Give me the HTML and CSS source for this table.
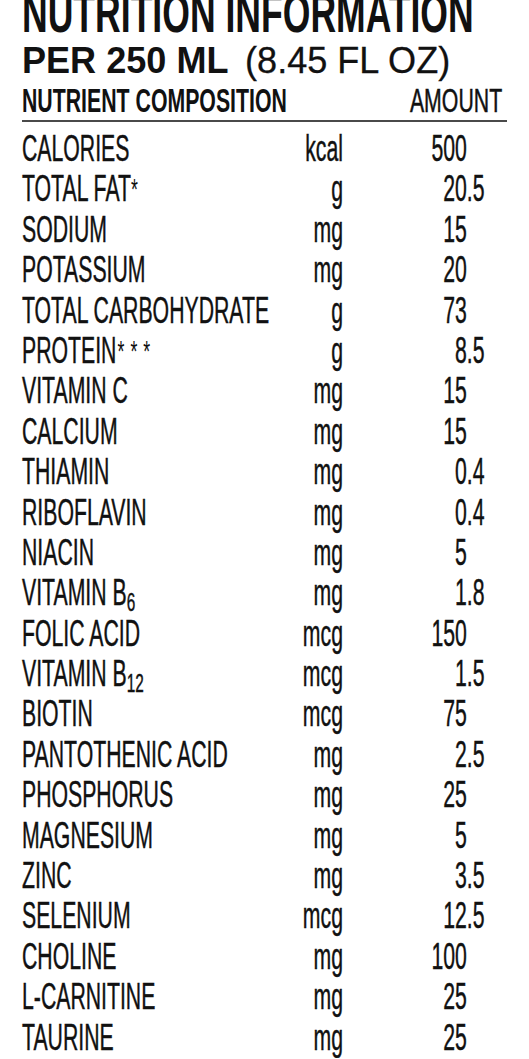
FILE: index.html
```html
<!DOCTYPE html>
<html lang="en">
<head>
<meta charset="utf-8">
<title>Nutrition Information</title>
<link rel="stylesheet" href="styles.css">
</head>
<body>
<main class="label">
  <h1 class="title">NUTRITION INFORMATION</h1>
  <p class="serving"><span class="serving-in"><b>PER 250 ML</b><span class="oz">(8.45 FL OZ)</span></span></p>
  <div class="colhead"><span class="ch-left">NUTRIENT COMPOSITION</span><span class="ch-right">AMOUNT</span></div>
  <div class="rule"></div>
  <div class="rows">
    <div class="row"><span class="name">CALORIES</span><span class="unit">kcal</span><span class="int">500</span><span class="frac"></span></div>
    <div class="row"><span class="name">TOTAL FAT<span class="ast">*</span></span><span class="unit">g</span><span class="int">20</span><span class="frac">.5</span></div>
    <div class="row"><span class="name">SODIUM</span><span class="unit">mg</span><span class="int">15</span><span class="frac"></span></div>
    <div class="row"><span class="name">POTASSIUM</span><span class="unit">mg</span><span class="int">20</span><span class="frac"></span></div>
    <div class="row"><span class="name">TOTAL CARBOHYDRATE</span><span class="unit">g</span><span class="int">73</span><span class="frac"></span></div>
    <div class="row"><span class="name">PROTEIN<span class="ast ast-multi">***</span></span><span class="unit">g</span><span class="int">8</span><span class="frac">.5</span></div>
    <div class="row"><span class="name">VITAMIN C</span><span class="unit">mg</span><span class="int">15</span><span class="frac"></span></div>
    <div class="row"><span class="name">CALCIUM</span><span class="unit">mg</span><span class="int">15</span><span class="frac"></span></div>
    <div class="row"><span class="name">THIAMIN</span><span class="unit">mg</span><span class="int">0</span><span class="frac">.4</span></div>
    <div class="row"><span class="name">RIBOFLAVIN</span><span class="unit">mg</span><span class="int">0</span><span class="frac">.4</span></div>
    <div class="row"><span class="name">NIACIN</span><span class="unit">mg</span><span class="int">5</span><span class="frac"></span></div>
    <div class="row"><span class="name">VITAMIN B<span class="sub">6</span></span><span class="unit">mg</span><span class="int">1</span><span class="frac">.8</span></div>
    <div class="row"><span class="name">FOLIC ACID</span><span class="unit">mcg</span><span class="int">150</span><span class="frac"></span></div>
    <div class="row"><span class="name">VITAMIN B<span class="sub">12</span></span><span class="unit">mcg</span><span class="int">1</span><span class="frac">.5</span></div>
    <div class="row"><span class="name">BIOTIN</span><span class="unit">mcg</span><span class="int">75</span><span class="frac"></span></div>
    <div class="row"><span class="name">PANTOTHENIC ACID</span><span class="unit">mg</span><span class="int">2</span><span class="frac">.5</span></div>
    <div class="row"><span class="name">PHOSPHORUS</span><span class="unit">mg</span><span class="int">25</span><span class="frac"></span></div>
    <div class="row"><span class="name">MAGNESIUM</span><span class="unit">mg</span><span class="int">5</span><span class="frac"></span></div>
    <div class="row"><span class="name">ZINC</span><span class="unit">mg</span><span class="int">3</span><span class="frac">.5</span></div>
    <div class="row"><span class="name">SELENIUM</span><span class="unit">mcg</span><span class="int">12</span><span class="frac">.5</span></div>
    <div class="row"><span class="name">CHOLINE</span><span class="unit">mg</span><span class="int">100</span><span class="frac"></span></div>
    <div class="row"><span class="name">L-CARNITINE</span><span class="unit">mg</span><span class="int">25</span><span class="frac"></span></div>
    <div class="row"><span class="name">TAURINE</span><span class="unit">mg</span><span class="int">25</span><span class="frac"></span></div>
  </div>
</main>
</body>
</html>
```
FILE: styles.css
```css
html {
  overflow: hidden;
  background: #ffffff;
}

body {
  margin: 0;
  background: #ffffff;
  color: #111111;
  font-family: "Liberation Sans", Arial, sans-serif;
}

.label {
  padding: 0 22px;
}

.title {
  margin: 0;
  width: 720px;
  font-size: 56px;
  font-weight: 700;
  line-height: 25px;
  white-space: nowrap;
  transform: scaleX(0.635);
  transform-origin: 0 0;
}

.serving {
  margin: 14px 0 0;
  font-size: 37px;
  line-height: 44px;
  white-space: nowrap;
}

.serving-in {
  display: inline-block;
  transform: scaleX(0.975);
  transform-origin: 0 0;
}

.serving b {
  font-weight: 700;
}

.oz {
  font-weight: 400;
  margin-left: 17px;
  -webkit-text-stroke: 0.3px currentColor;
}

.colhead {
  margin-top: 2px;
  width: 767px;
  display: flex;
  justify-content: space-between;
  font-size: 34px;
  line-height: 30px;
  white-space: nowrap;
  transform: scaleX(0.626);
  transform-origin: 0 0;
}

.ch-left {
  font-weight: 700;
}

.ch-right {
  font-weight: 400;
  -webkit-text-stroke: 0.5px currentColor;
}

.rule {
  margin-top: 5px;
  height: 2px;
  background: #4a4a4a;
}

.rows {
  margin-top: 7px;
  width: 834px;
  transform: scaleX(0.59);
  transform-origin: 0 0;
  font-size: 36px;
  -webkit-text-stroke: 0.45px currentColor;
}

.row {
  display: grid;
  grid-template-columns: 424px 120px 210px 80px;
  line-height: 40.4px;
  height: 40.4px;
  white-space: nowrap;
}

.unit,
.int {
  text-align: right;
}

.frac {
  text-align: left;
}

.sub {
  font-size: 26px;
  line-height: 1;
  vertical-align: -6px;
}

.ast {
  font-size: 30px;
  line-height: 1;
  vertical-align: 2px;
  -webkit-text-stroke: 0;
}

.ast-multi {
  margin-left: 2px;
  letter-spacing: 10px;
}
```
